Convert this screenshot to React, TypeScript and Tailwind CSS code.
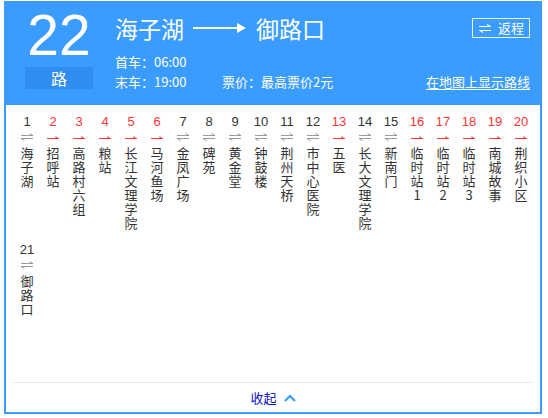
import React from "react";

const stops = [
  { name: "海子湖", oneWay: false },
  { name: "招呼站", oneWay: true },
  { name: "高路村六组", oneWay: true },
  { name: "粮站", oneWay: true },
  { name: "长江文理学院", oneWay: true },
  { name: "马河鱼场", oneWay: true },
  { name: "金凤广场", oneWay: false },
  { name: "碑苑", oneWay: false },
  { name: "黄金堂", oneWay: false },
  { name: "钟鼓楼", oneWay: false },
  { name: "荆州天桥", oneWay: false },
  { name: "市中心医院", oneWay: false },
  { name: "五医", oneWay: true },
  { name: "长大文理学院", oneWay: false },
  { name: "新南门", oneWay: false },
  { name: "临时站1", oneWay: true },
  { name: "临时站2", oneWay: true },
  { name: "临时站3", oneWay: true },
  { name: "南城故事", oneWay: true },
  { name: "荆织小区", oneWay: true },
  { name: "御路口", oneWay: false },
];

const cjk = "font-['Microsoft_YaHei','Noto_Sans_CJK_SC',sans-serif]";

function BothWays() {
  return (
    <svg width="12" height="8" viewBox="0 0 12 8" className="block">
      <path d="M0 2.5H12L8.5 0.5" fill="none" stroke="#9a9a9a" strokeWidth="1" />
      <path d="M12 5.5H0L3.5 7.5" fill="none" stroke="#9a9a9a" strokeWidth="1" />
    </svg>
  );
}

function OneWay() {
  return (
    <svg width="12" height="8" viewBox="0 0 12 8" className="block">
      <path d="M0 5.5H12" fill="none" stroke="#f33" strokeWidth="1" />
      <path d="M8.5 3L12 6H8.5Z" fill="#f33" />
    </svg>
  );
}

function Stop({ index, name, oneWay }: { index: number; name: string; oneWay: boolean }) {
  return (
    <div className="flex w-[26px] flex-col items-center mb-[12px]">
      <div
        className={`font-['Liberation_Sans',Arial,sans-serif] text-[13px] leading-[16px] ${
          oneWay ? "text-[#f33]" : "text-[#333]"
        }`}
      >
        {index}
      </div>
      <div className="mt-[3px] mb-[5px]">{oneWay ? <OneWay /> : <BothWays />}</div>
      <div className={`${cjk} flex flex-col items-center text-[13px] leading-[14px] text-[#333]`}>
        {[...name].map((ch, i) => (
          <span key={i}>{ch}</span>
        ))}
      </div>
    </div>
  );
}

export default function App() {
  return (
    <div className="bg-white w-[548px] h-[418px] pt-px">
      <div className="ml-[4px] w-[538px] border-2 border-[#3b9cff] bg-white">
        {/* header */}
        <div className="flex h-[102px] bg-[#3b9cff] text-white">
          <div className="ml-[19px] flex w-[68px] flex-col items-center">
            <div className="mt-[4px] font-['Liberation_Sans',Arial,sans-serif] text-[57px] leading-[57px]">
              22
            </div>
            <div className={`${cjk} mt-[3px] h-[22px] w-[68px] bg-[#2f8ef0] text-center text-[16px] leading-[22px]`}>
              路
            </div>
          </div>
          <div className="ml-[22px] flex flex-1 flex-col pr-[10px]">
            <div className="flex items-center mt-[11px] h-[28px]">
              <span className={`${cjk} text-[23px] leading-[28px]`}>海子湖</span>
              <svg width="54" height="12" viewBox="0 0 54 12" className="mx-[9px]">
                <path d="M0 6H51" stroke="#fff" strokeWidth="2" />
                <path d="M44 1L53 6L44 11Z" fill="#fff" />
              </svg>
              <span className={`${cjk} text-[23px] leading-[28px]`}>御路口</span>
              <div className={`${cjk} ml-auto flex h-[20px] w-[58px] items-center border border-white/90 text-[13px]`}>
                <svg width="12" height="9" viewBox="0 0 12 9" className="ml-[6px]">
                  <path d="M0 2.5H11L8 0.5" fill="none" stroke="#fff" strokeWidth="1.2" />
                  <path d="M12 6.5H1L4 8.5" fill="none" stroke="#fff" strokeWidth="1.2" />
                </svg>
                <span className="ml-[7px] leading-[18px]">返程</span>
              </div>
            </div>
            <div className={`${cjk} mt-[10px] text-[13px] leading-[20px]`}>首车：06:00</div>
            <div className={`${cjk} flex text-[13px] leading-[20px]`}>
              <span className="w-[107px]">末车：19:00</span>
              <span>票价：最高票价2元</span>
              <a className="ml-auto underline underline-offset-2">在地图上显示路线</a>
            </div>
          </div>
        </div>

        {/* stops */}
        <div className="h-[277px] pl-[8px] pt-[9px]">
          <div className="flex flex-wrap">
            {stops.map((s, i) => (
              <Stop key={s.name} index={i + 1} name={s.name} oneWay={s.oneWay} />
            ))}
          </div>
        </div>

        <div className="mx-[7px] h-px bg-[#e8e8e8]" />
        <div className="flex h-[29px] items-center justify-center">
          <span className={`${cjk} text-[13px] text-[#1010cc]`}>收起</span>
          <svg width="12" height="8" viewBox="0 0 12 8" className="ml-[7px]">
            <path d="M1 7L6 2L11 7" fill="none" stroke="#3b9cff" strokeWidth="2.2" />
          </svg>
        </div>
      </div>
    </div>
  );
}
